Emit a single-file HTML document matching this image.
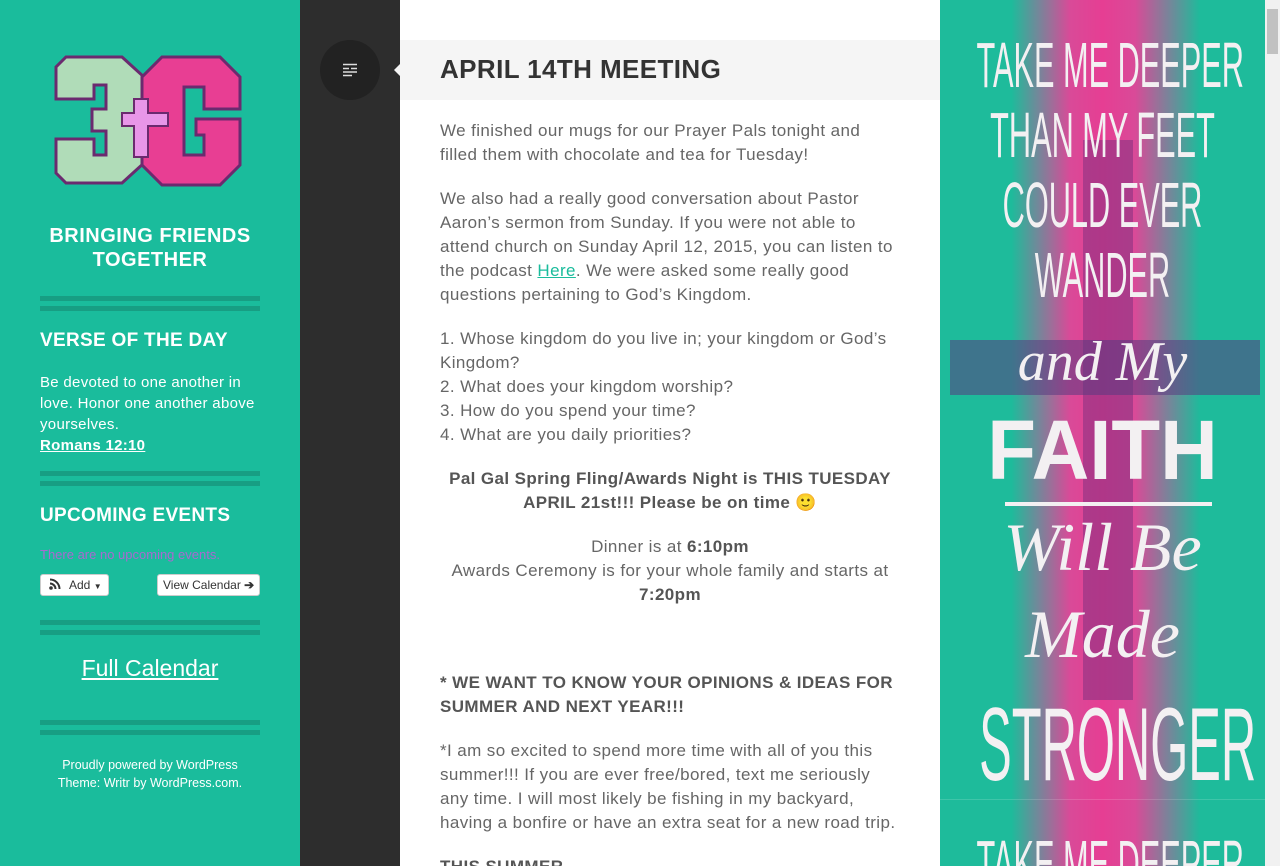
<!DOCTYPE html>
<html><head><meta charset="utf-8">
<style>
*{margin:0;padding:0;box-sizing:border-box}
html,body{width:1280px;height:866px;overflow:hidden}
body{background:#fff;font-family:"Liberation Sans",sans-serif;position:relative}
#side{position:absolute;left:0;top:0;width:300px;height:866px;background:#1abc9c;color:#fff}
#dark{position:absolute;left:300px;top:0;width:100px;height:866px;background:#2d2d2d}
#circ{position:absolute;left:320px;top:40px;width:60px;height:60px;border-radius:50%;background:#222}
#content{position:absolute;left:400px;top:0;width:540px;height:866px;background:#fff;overflow:hidden}
#hbar{position:absolute;left:400px;top:40px;width:540px;height:60px;background:#f5f5f5}
#hbar h1{position:absolute;left:40px;top:14px;font-size:26px;font-weight:bold;color:#333;letter-spacing:0.4px}
.tri{position:absolute;left:394px;top:64px;width:0;height:0;border-top:6px solid transparent;border-bottom:6px solid transparent;border-right:6px solid #f5f5f5}
.txt{position:absolute;left:440px;width:470px;color:#666;font-size:17px;line-height:24px;white-space:nowrap;letter-spacing:0.4px}
.txt b{color:#555}
.c{text-align:center;width:460px}
a{color:#1abc9c}
.div{position:absolute;left:40px;width:220px;height:15px;border-top:5px solid #179e83;border-bottom:5px solid #179e83}
.sh{position:absolute;left:40px;font-size:19px;font-weight:bold;letter-spacing:0.3px}
.btn{position:absolute;top:574px;height:22px;background:#fff;border:1px solid #ccc;border-radius:3px;color:#333;font-size:12px;line-height:20px;padding:0 5px;white-space:nowrap}
#right{position:absolute;left:940px;top:0;width:325px;height:866px;background:linear-gradient(90deg,#1ebb9b 0%,#1ebb9b 22%,#d94a98 40%,#e63e93 50%,#d94a98 60%,#1ebb9b 80%,#1ebb9b 100%);overflow:hidden}
.big{position:absolute;left:-100px;width:525px;text-align:center;color:#f3f0f2;white-space:nowrap;transform-origin:center}
#sb{position:absolute;left:1265px;top:0;width:15px;height:866px;background:#f1f1f1}
</style></head><body>
<div id="side">
  <svg style="position:absolute;left:54px;top:55px" width="190" height="132" viewBox="0 0 190 132">
    <path d="M12 2 H68 L90 22 V54 L80 64 L90 74 V108 L68 128 H12 L2 118 V84 H40 V100 H52 V76 H38 V54 H52 V30 H40 V44 H2 V12 Z" fill="#b0dcb8" stroke="#6b2a6f" stroke-width="3"/>
    <path d="M108 2 H166 L186 22 V54 H150 V32 H130 V100 H150 V80 H142 V64 H186 V110 L166 130 H108 L88 110 V22 Z" fill="#e83e93" stroke="#6b2a6f" stroke-width="3"/>
    <path d="M80 44 H94 V58 H114 V71 H94 V102 H80 V71 H68 V58 H80 Z" fill="#e896e8" stroke="#6b2a6f" stroke-width="2"/>
  </svg>
  <div style="position:absolute;left:0;top:224px;width:300px;text-align:center;font-size:20px;font-weight:bold;line-height:24px;letter-spacing:0.5px">BRINGING FRIENDS<br>TOGETHER</div>
  <div class="div" style="top:296px"></div>
  <div class="sh" style="top:330px">VERSE OF THE DAY</div>
  <div style="position:absolute;left:40px;top:372px;font-size:15px;line-height:21px;white-space:nowrap;letter-spacing:0.3px">Be devoted to one another in<br>love. Honor one another above<br>yourselves.<br><b style="text-decoration:underline">Romans 12:10</b></div>
  <div class="div" style="top:471px"></div>
  <div class="sh" style="top:505px">UPCOMING EVENTS</div>
  <div style="position:absolute;left:40px;top:547px;font-size:13px;color:#a86ad0">There are no upcoming events.</div>
  <div class="btn" style="left:40px;width:69px;padding-left:8px"><svg width="12" height="12" viewBox="0 0 12 12" style="vertical-align:-1px;margin-right:8px"><circle cx="2" cy="10" r="1.8" fill="#333"/><path d="M1 5.5a5.5 5.5 0 0 1 5.5 5.5M1 1.5a9.5 9.5 0 0 1 9.5 9.5" stroke="#333" stroke-width="2" fill="none"/></svg>Add <span style="font-size:8px">▼</span></div>
  <div class="btn" style="left:157px;width:103px">View Calendar <b>➔</b></div>
  <div class="div" style="top:620px"></div>
  <div style="position:absolute;left:0;top:655px;width:300px;text-align:center;font-size:23px;text-decoration:underline">Full Calendar</div>
  <div class="div" style="top:720px"></div>
  <div style="position:absolute;left:0;top:756px;width:300px;text-align:center;font-size:12.5px;line-height:18px">Proudly powered by WordPress<br>Theme: Writr by WordPress.com.</div>
</div>
<div id="dark"></div>
<div id="circ"><svg style="position:absolute;left:22px;top:23px" width="16" height="14" viewBox="0 0 16 14"><path d="M1 1.5h14M1 5.5h6M9 5.5h6M1 9h14M1 12.5h9" stroke="#ddd" stroke-width="1.6"/></svg></div>
<div id="content"></div>
<div id="hbar"><h1>APRIL 14TH MEETING</h1></div>
<div class="tri"></div>
<div class="txt" style="top:119px">We finished our mugs for our Prayer Pals tonight and<br>filled them with chocolate and tea for Tuesday!</div>
<div class="txt" style="top:187px">We also had a really good conversation about Pastor<br>Aaron’s sermon from Sunday. If you were not able to<br>attend church on Sunday April 12, 2015, you can listen to<br>the podcast <a href="#">Here</a>. We were asked some really good<br>questions pertaining to God’s Kingdom.</div>
<div class="txt" style="top:327px">1. Whose kingdom do you live in; your kingdom or God’s<br>Kingdom?<br>2. What does your kingdom worship?<br>3. How do you spend your time?<br>4. What are you daily priorities?</div>
<div class="txt c" style="top:467px"><b>Pal Gal Spring Fling/Awards Night is THIS TUESDAY<br>APRIL 21st!!! Please be on time 🙂</b></div>
<div class="txt c" style="top:535px">Dinner is at <b>6:10pm</b><br>Awards Ceremony is for your whole family and starts at<br><b>7:20pm</b></div>
<div class="txt" style="top:671px"><b>* WE WANT TO KNOW YOUR OPINIONS &amp; IDEAS FOR<br>SUMMER AND NEXT YEAR!!!</b></div>
<div class="txt" style="top:739px">*I am so excited to spend more time with all of you this<br>summer!!! If you are ever free/bored, text me seriously<br>any time. I will most likely be fishing in my backyard,<br>having a bonfire or have an extra seat for a new road trip.</div>
<div class="txt" style="top:846px;height:20px;overflow:hidden;padding-top:9px"><b>THIS SUMMER</b></div>
<div id="right">
  <div style="position:absolute;left:143px;top:140px;width:50px;height:560px;background:#7a2f7e;opacity:.5"></div>
  <div style="position:absolute;left:10px;top:340px;width:310px;height:55px;background:#5a3a80;opacity:.55"></div>
  <div class="big" style="top:30px;font-size:64px;line-height:70px;transform:scaleX(.48)">TAKE ME DEEPER<br>THAN MY FEET<br>COULD EVER<br>WANDER</div>
  <div class="big" style="top:330px;font-size:56px;font-family:'Liberation Serif',serif;font-style:italic">and My</div>
  <div class="big" style="top:405px;font-size:84px;font-weight:900;line-height:90px;transform:scaleX(.95)">FAITH</div>
  <div style="position:absolute;left:65px;top:502px;width:207px;height:4px;background:#f3f0f2"></div>
  <div class="big" style="top:508px;font-size:68px;font-family:'Liberation Serif',serif;font-style:italic">Will Be</div>
  <div class="big" style="top:595px;font-size:68px;font-family:'Liberation Serif',serif;font-style:italic">Made</div>
  <div class="big" style="top:690px;font-size:104px;line-height:110px;transform:scaleX(.47)">STRONGER</div>
  <div style="position:absolute;left:0;top:799px;width:325px;height:1px;background:rgba(255,255,255,.15)"></div>
  <div class="big" style="top:828px;font-size:64px;line-height:70px;transform:scaleX(.48)">TAKE ME DEEPER</div>
</div>
<div id="sb"><div style="position:absolute;left:2px;top:9px;width:11px;height:45px;background:#c1c1c1"></div></div>
</body></html>
